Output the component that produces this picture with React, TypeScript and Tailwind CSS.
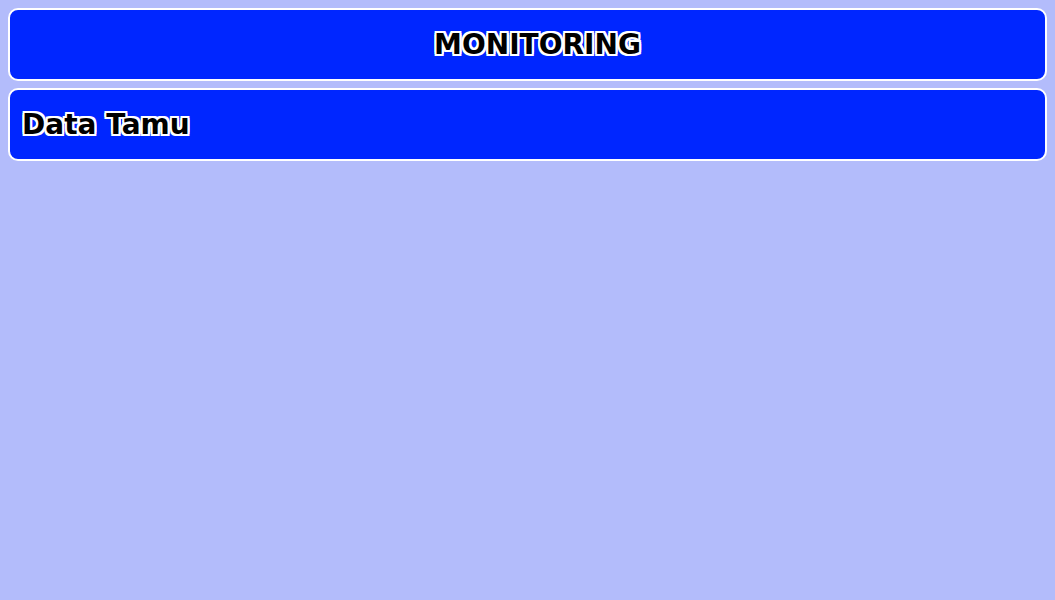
const outline =
  "[text-shadow:2px_0_#fff,-2px_0_#fff,0_2px_#fff,0_-2px_#fff,1px_1px_#fff,-1px_-1px_#fff,1px_-1px_#fff,-1px_1px_#fff,2px_2px_#fff,-2px_-2px_#fff,2px_-2px_#fff,-2px_2px_#fff]";

export default function App() {
  return (
    <div className="min-h-[600px] w-full bg-[#b3bcfb] p-2 font-['DejaVu_Sans',Verdana,sans-serif]">
      <div className="flex flex-col gap-[7px]">
        <header className="flex h-[73px] items-center justify-center rounded-[10px] border-2 border-white bg-[#0026ff] pl-5">
          <h1 className={`text-[28px] font-bold text-black ${outline}`}>MONITORING</h1>
        </header>
        <section className="flex h-[73px] items-center rounded-[10px] border-2 border-white bg-[#0026ff] px-3">
          <h2 className={`text-[28px] font-bold text-black ${outline}`}>Data Tamu</h2>
        </section>
      </div>
    </div>
  );
}
